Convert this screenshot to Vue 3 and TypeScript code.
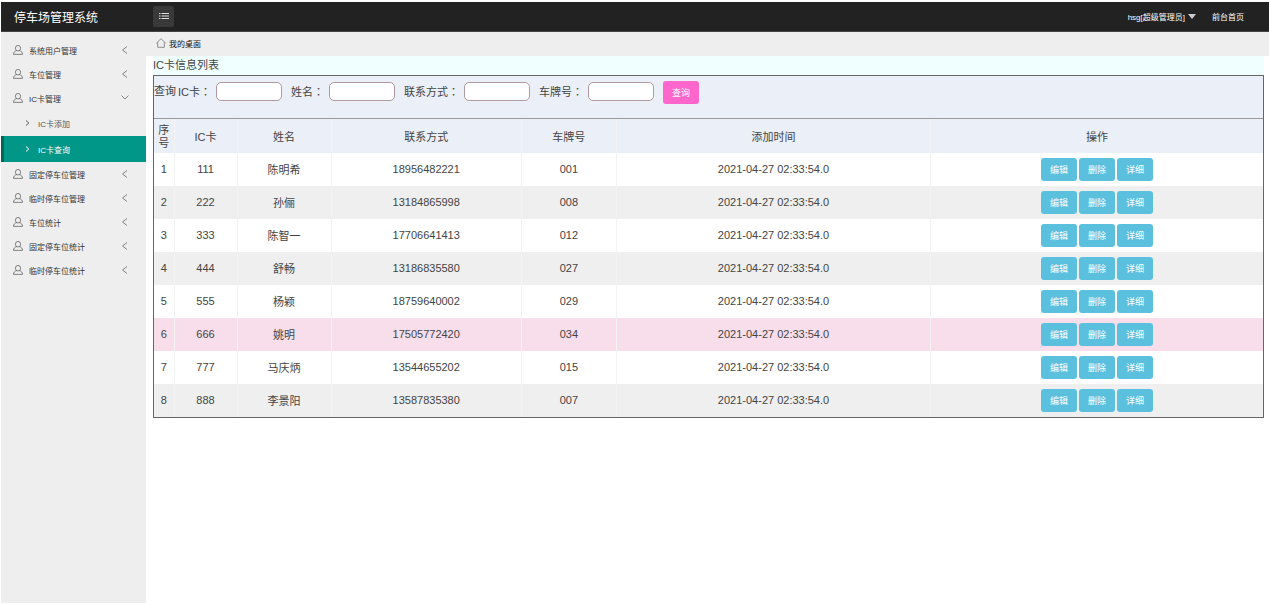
<script setup lang="ts">
import { ref } from 'vue'

interface MenuItem {
  label: string
  open?: boolean
  children?: { label: string; active?: boolean }[]
}

interface Card {
  no: string
  name: string
  phone: string
  plate: string
}

const menu = ref<MenuItem[]>([
  { label: '系统用户管理' },
  { label: '车位管理' },
  { label: 'IC卡管理', open: true, children: [{ label: 'IC卡添加' }, { label: 'IC卡查询', active: true }] },
  { label: '固定停车位管理' },
  { label: '临时停车位管理' },
  { label: '车位统计' },
  { label: '固定停车位统计' },
  { label: '临时停车位统计' },
])

const fields = [
  { id: 'card', label: 'IC卡' },
  { id: 'name', label: '姓名' },
  { id: 'phone', label: '联系方式' },
  { id: 'plate', label: '车牌号' },
]

const columns = ['序号', 'IC卡', '姓名', '联系方式', '车牌号', '添加时间', '操作']
const actions = ['编辑', '删除', '详细']
const addedAt = '2021-04-27 02:33:54.0'
const highlighted = '666'

const cards: Card[] = [
  { no: '111', name: '陈明希', phone: '18956482221', plate: '001' },
  { no: '222', name: '孙俪', phone: '13184865998', plate: '008' },
  { no: '333', name: '陈智一', phone: '17706641413', plate: '012' },
  { no: '444', name: '舒畅', phone: '13186835580', plate: '027' },
  { no: '555', name: '杨颖', phone: '18759640002', plate: '029' },
  { no: '666', name: '姚明', phone: '17505772420', plate: '034' },
  { no: '777', name: '马庆炳', phone: '13544655202', plate: '015' },
  { no: '888', name: '李景阳', phone: '13587835380', plate: '007' },
]
</script>

<template>
  <div class="page">
    <header class="topbar">
      <div class="brand">停车场管理系统</div>
      <button class="toggle" type="button" aria-label="菜单">
        <svg width="10" height="8" viewBox="0 0 10 8" fill="none" stroke="#ddd">
          <path d="M0 1.500h1.500M2.500 1.500H10M0 4h1.500M2.500 4H10M0 6.500h1.500M2.500 6.500H10" />
        </svg>
      </button>
      <nav class="topnav">
        <a href="#" class="user">hsg[超级管理员]
          <svg width="8" height="5" viewBox="0 0 8 5"><path d="M0 0h8L4 5z" fill="#ccc" /></svg>
        </a>
        <a href="#">前台首页</a>
      </nav>
    </header>

    <div class="body">
      <aside class="sidebar">
        <ul>
          <li v-for="item in menu" :key="item.label">
            <a href="#" class="item" @click.prevent="item.open = !item.open">
              <svg class="person" width="10" height="10" viewBox="0 0 10 10" fill="none" stroke="#666" stroke-width=".8">
                <ellipse cx="5" cy="3.200" rx="2.600" ry="2.800" />
                <path d="M3.600 5.600C1.700 6.100.5 7.300.5 9.400h9C9.500 7.300 8.300 6.100 6.400 5.600" />
              </svg>
              <span>{{ item.label }}</span>
              <svg class="arrow" width="8" height="8" viewBox="0 0 8 8" fill="none" stroke="#777" stroke-width=".9">
                <path :d="item.open ? 'M.5 1.500 4 5l3.500-3.500' : 'M6 .5 1.500 4 6 7.500'" />
              </svg>
            </a>
            <ul v-if="item.children && item.open">
              <li v-for="child in item.children" :key="child.label">
                <a href="#" class="sub" :class="{ active: child.active }">
                  <svg width="5" height="6" viewBox="0 0 5 6" fill="none" stroke="currentColor">
                    <path d="M1 .5 3.800 3 1 5.500" />
                  </svg>
                  <span>{{ child.label }}</span>
                </a>
              </li>
            </ul>
          </li>
        </ul>
      </aside>

      <main class="content">
        <div class="crumb">
          <svg width="10" height="10" viewBox="0 0 10 10" fill="none" stroke="#777" stroke-width=".8">
            <path d="M.3 5.200 5 .7l4.700 4.500M1.700 4.200v5.100h6.600V4.200" />
          </svg>
          <a href="#">我的桌面</a>
        </div>
        <div class="panel">
          <h1>IC卡信息列表</h1>
          <div class="frame">
            <form class="search" @submit.prevent>
              <span class="lead">查询</span>
              <div v-for="f in fields" :key="f.id" class="field">
                <label :for="f.id">{{ f.label }}<span class="colon">：</span></label>
                <input :id="f.id" type="text" />
              </div>
              <button class="btn find" type="submit">查询</button>
            </form>
            <table>
              <colgroup>
                <col class="c-index" /><col class="c-card" /><col class="c-name" /><col class="c-phone" />
                <col class="c-plate" /><col class="c-time" /><col class="c-action" />
              </colgroup>
              <thead>
                <tr><th v-for="c in columns" :key="c" scope="col">{{ c }}</th></tr>
              </thead>
              <tbody>
                <tr v-for="(card, i) in cards" :key="card.no" :class="{ lit: card.no === highlighted }">
                  <td>{{ i + 1 }}</td>
                  <td>{{ card.no }}</td>
                  <td class="name">{{ card.name }}</td>
                  <td>{{ card.phone }}</td>
                  <td>{{ card.plate }}</td>
                  <td>{{ addedAt }}</td>
                  <td>
                    <div class="actions">
                      <button v-for="a in actions" :key="a" class="btn" type="button">{{ a }}</button>
                    </div>
                  </td>
                </tr>
              </tbody>
            </table>
          </div>
        </div>
      </main>
    </div>
  </div>
</template>

<style>
body {
  margin: 0;
  background: #fff;
}
</style>

<style scoped>
* {
  box-sizing: border-box;
}
.page {
  display: flex;
  flex-direction: column;
  min-height: 100vh;
  padding: 2px 0 1px 1px;
  font-family: "Liberation Sans", "Noto Sans CJK SC", sans-serif;
  font-size: 8px;
  color: #333;
}
a {
  color: inherit;
  text-decoration: none;
}
ul {
  list-style: none;
  margin: 0;
  padding: 0;
}
button,
input {
  font-family: inherit;
}
svg {
  flex: none;
}
.topbar {
  display: flex;
  align-items: center;
  height: 30px;
  padding-bottom: 1px;
  background: #222;
  border-bottom: 1px solid #444;
  color: #fff;
}
.brand {
  width: 152px;
  padding-left: 13px;
  font-size: 12px;
}
.toggle {
  display: flex;
  align-items: center;
  justify-content: center;
  width: 21px;
  height: 21px;
  padding: 0;
  border: 0;
  border-radius: 2px;
  background: #393939;
}
.topnav {
  display: flex;
  gap: 16px;
  margin-left: auto;
  padding-right: 25px;
}
.user {
  display: flex;
  align-items: center;
  gap: 3px;
}
.body {
  display: flex;
  flex: 1;
}
.sidebar {
  flex: none;
  width: 145px;
  padding-top: 6px;
  background: #eee;
}
.item {
  display: flex;
  align-items: center;
  gap: 6px;
  height: 24px;
  padding: 0 17px 0 12px;
}
.arrow {
  margin-left: auto;
}
.sub {
  display: flex;
  align-items: center;
  gap: 8px;
  height: 26px;
  padding-left: 21px;
  border-left: 3px solid transparent;
  color: #555;
}
.sub.active {
  background: #009688;
  border-left-color: #00675d;
  color: #fff;
}
.content {
  flex: 1;
  min-width: 0;
}
.crumb {
  display: flex;
  align-items: center;
  gap: 3px;
  height: 24px;
  padding: 0 0 2px 10px;
  background: #eee;
  color: #111;
}
.panel {
  margin: 0 5px 0 7px;
  font-size: 11px;
  color: #444;
}
h1 {
  margin: 0;
  height: 19px;
  font-size: 11px;
  font-weight: 400;
  line-height: 19px;
  background: #f0ffff;
}
.frame {
  border: 1px solid #666;
}
.search {
  display: flex;
  align-items: flex-start;
  height: 43px;
  padding-top: 5px;
  background: #eaeff8;
  border-bottom: 1px solid #999;
}
.lead,
.field label {
  line-height: 20px;
}
.lead {
  margin-right: 2px;
}
.field {
  display: flex;
  align-items: flex-start;
  margin-right: 9px;
}
.field label {
  margin-right: 5px;
}
.colon {
  font-family: "Noto Sans CJK TC", sans-serif;
}
.field input {
  width: 66px;
  height: 19px;
  margin-top: 1px;
  padding: 0 4px;
  border: 1px solid #b09a9f;
  border-radius: 5px;
  background: #fff;
  font-size: 11px;
}
.btn {
  width: 36px;
  height: 23px;
  padding: 0;
  border: 0;
  border-radius: 3px;
  background: #5bc0de;
  color: #fff;
  font-size: 9px;
}
.btn.find {
  background: #ff66cc;
}
table {
  width: 100%;
  table-layout: fixed;
  border-collapse: collapse;
}
.c-index { width: 20px; }
.c-card { width: 63px; }
.c-name { width: 94px; }
.c-phone { width: 190px; }
.c-plate { width: 95px; }
.c-time { width: 314px; }
.c-action { width: 332px; }
th,
td {
  height: 33px;
  padding: 0;
  text-align: center;
  font-weight: 400;
  line-height: 13px;
  vertical-align: middle;
}
th + th,
td + td {
  border-left: 1px solid #f3f3f3;
}
th {
  height: 34px;
  padding: 2px 4px 0;
  background: #eaeff8;
}
td.name {
  padding-top: 2px;
}
tbody tr:nth-child(even) {
  background: #efefef;
}
tbody tr.lit {
  background: #f8deeb;
}
.actions {
  display: flex;
  justify-content: center;
  gap: 2px;
}
</style>
